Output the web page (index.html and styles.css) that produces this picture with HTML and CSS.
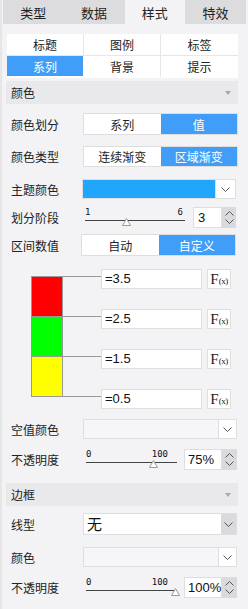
FILE: index.html
```html
<!DOCTYPE html>
<html lang="zh">
<head>
<meta charset="utf-8">
<link rel="stylesheet" href="styles.css">
</head>
<body>
<div class="panel">
  <div class="tabs">
    <div class="tab">类型</div>
    <div class="tab">数据</div>
    <div class="tab active">样式</div>
    <div class="tab">特效</div>
  </div>

  <div class="subtabs">
    <div class="st">标题</div><div class="st">图例</div><div class="st">标签</div>
    <div class="st sel">系列</div><div class="st">背景</div><div class="st">提示</div>
  </div>

  <div class="shead h-color"><span>颜色</span><span class="caret"></span></div>

  <div class="row r-divide">
    <span class="label">颜色划分</span>
    <div class="seg"><span>系列</span><span class="on">值</span></div>
  </div>

  <div class="row r-type">
    <span class="label">颜色类型</span>
    <div class="seg"><span>连续渐变</span><span class="on">区域渐变</span></div>
  </div>

  <div class="row r-theme">
    <span class="label">主题颜色</span>
    <div class="picker">
      <div class="picker-color"></div>
      <div class="picker-btn"><svg width="9" height="5" viewBox="0 0 9 5"><polyline points="0.5,0.5 4.5,4.5 8.5,0.5" fill="none" stroke="#555" stroke-width="1"/></svg></div>
    </div>
  </div>

  <div class="row r-stage">
    <span class="label">划分阶段</span>
    <div class="slider s-stage">
      <div class="ticks"><span>1</span><span>6</span></div>
      <div class="track"></div>
      <svg class="thumb" width="9" height="8" viewBox="0 0 9 8"><polygon points="4.5,0.5 8.5,7.5 0.5,7.5" fill="#fff" stroke="#999"/></svg>
    </div>
    <div class="spin sp-stage">
      <div class="num">3</div>
      <div class="arrows">
        <svg width="9" height="5" viewBox="0 0 9 5"><polyline points="0.5,4.5 4.5,0.5 8.5,4.5" fill="none" stroke="#555"/></svg>
        <svg width="9" height="5" viewBox="0 0 9 5"><polyline points="0.5,0.5 4.5,4.5 8.5,0.5" fill="none" stroke="#555"/></svg>
      </div>
    </div>
  </div>

  <div class="row r-range">
    <span class="label">区间数值</span>
    <div class="seg seg-range"><span>自动</span><span class="on">自定义</span></div>
  </div>

  <div class="legend">
    <div class="swatches">
      <div class="sw red"></div>
      <div class="sw green"></div>
      <div class="sw yellow"></div>
    </div>
    <div class="stops">
      <div class="stop"><span class="lead"></span><div class="val">=3.5</div><div class="fx">F<small>(x)</small></div></div>
      <div class="stop"><span class="lead"></span><div class="val">=2.5</div><div class="fx">F<small>(x)</small></div></div>
      <div class="stop"><span class="lead"></span><div class="val">=1.5</div><div class="fx">F<small>(x)</small></div></div>
      <div class="stop"><span class="lead"></span><div class="val">=0.5</div><div class="fx">F<small>(x)</small></div></div>
    </div>
  </div>

  <div class="row r-null">
    <span class="label">空值颜色</span>
    <div class="select dis">
      <div class="txt"></div>
      <div class="btn"><svg width="9" height="5" viewBox="0 0 9 5"><polyline points="0.5,0.5 4.5,4.5 8.5,0.5" fill="none" stroke="#555"/></svg></div>
    </div>
  </div>

  <div class="row r-op1">
    <span class="label">不透明度</span>
    <div class="slider s-op">
      <div class="ticks"><span>0</span><span>100</span></div>
      <div class="track"></div>
      <svg class="thumb t-75" width="9" height="8" viewBox="0 0 9 8"><polygon points="4.5,0.5 8.5,7.5 0.5,7.5" fill="#fff" stroke="#999"/></svg>
    </div>
    <div class="spin sp-op">
      <div class="num">75%</div>
      <div class="arrows">
        <svg width="9" height="5" viewBox="0 0 9 5"><polyline points="0.5,4.5 4.5,0.5 8.5,4.5" fill="none" stroke="#555"/></svg>
        <svg width="9" height="5" viewBox="0 0 9 5"><polyline points="0.5,0.5 4.5,4.5 8.5,0.5" fill="none" stroke="#555"/></svg>
      </div>
    </div>
  </div>

  <div class="shead h-border"><span>边框</span><span class="caret"></span></div>

  <div class="row r-line">
    <span class="label">线型</span>
    <div class="select">
      <div class="txt">无</div>
      <div class="btn gray"><svg width="9" height="5" viewBox="0 0 9 5"><polyline points="0.5,0.5 4.5,4.5 8.5,0.5" fill="none" stroke="#555"/></svg></div>
    </div>
  </div>

  <div class="row r-bcolor">
    <span class="label">颜色</span>
    <div class="select dis">
      <div class="txt"></div>
      <div class="btn"><svg width="9" height="5" viewBox="0 0 9 5"><polyline points="0.5,0.5 4.5,4.5 8.5,0.5" fill="none" stroke="#555"/></svg></div>
    </div>
  </div>

  <div class="row r-op2">
    <span class="label">不透明度</span>
    <div class="slider s-op">
      <div class="ticks"><span>0</span><span>100</span></div>
      <div class="track"></div>
      <svg class="thumb t-100" width="9" height="8" viewBox="0 0 9 8"><polygon points="4.5,0.5 8.5,7.5 0.5,7.5" fill="#fff" stroke="#999"/></svg>
    </div>
    <div class="spin sp-op">
      <div class="num">100%</div>
      <div class="arrows">
        <svg width="9" height="5" viewBox="0 0 9 5"><polyline points="0.5,4.5 4.5,0.5 8.5,4.5" fill="none" stroke="#555"/></svg>
        <svg width="9" height="5" viewBox="0 0 9 5"><polyline points="0.5,0.5 4.5,4.5 8.5,0.5" fill="none" stroke="#555"/></svg>
      </div>
    </div>
  </div>
</div>
</body>
</html>
```

FILE: styles.css
```css
* { box-sizing: border-box; margin: 0; padding: 0; }
html, body { width: 248px; height: 609px; overflow: hidden; }
body {
  background: #f3f3f5;
  font-family: "Noto Sans CJK SC", "Noto Sans", sans-serif;
  font-size: 12px;
  color: #222;
}
.panel {
  height: 609px;
  border-left: 2px solid #e6e6e8;
  display: flex;
  flex-direction: column;
}

/* top tabs */
.tabs { display: flex; height: 24px; margin: 0 2px 0 1px; }
.tab {
  flex: 1;
  background: #dcdcde;
  display: flex;
  align-items: center;
  justify-content: center;
  font-size: 13px;
  color: #222;
}
.tab.active { background: #f3f3f5; }

/* sub tabs */
.subtabs {
  margin: 10px 10px 0 5px;
  display: grid;
  grid-template-columns: 1fr 1fr 1fr;
  grid-template-rows: 22px 22px;
  background: #fff;
}
.st {
  display: flex;
  align-items: center;
  justify-content: center;
  border-right: 1px solid #e6e6e6;
  border-bottom: 1px solid #e6e6e6;
}
.st:nth-child(3n) { border-right: none; }
.st:nth-child(n+4) { border-bottom: 2px solid #fff; }
.st.sel { background: #409ef8; color: #fff; border-right-color: #fff; }

/* section headers */
.shead {
  height: 23px;
  margin: 0 10px 0 4px;
  padding: 0 7px 0 5px;
  background: #e9e9eb;
  display: flex;
  align-items: center;
  justify-content: space-between;
}
.h-color { margin-top: 3px; }
.h-border { margin-top: 13px; }
.caret {
  width: 0; height: 0;
  border-left: 3.5px solid transparent;
  border-right: 3.5px solid transparent;
  border-top: 4px solid #a9a9ab;
}

/* rows */
.row { display: flex; align-items: center; margin-left: 9px; }
.label { width: 72px; flex: none; }
.r-divide { margin-top: 9px; height: 22px; }
.r-type { margin-top: 11px; height: 21px; }
.r-theme { margin-top: 12px; height: 20px; }
.r-stage { margin-top: 8px; height: 21px; }
.r-range { margin-top: 6px; height: 22px; }
.r-null { margin-top: 10px; height: 20px; }
.r-op1 { margin-top: 10px; height: 21px; }
.r-line { margin-top: 7px; height: 22px; }
.r-bcolor { margin-top: 12px; height: 20px; }
.r-op2 { margin-top: 10px; height: 21px; }

/* segmented */
.seg {
  display: flex;
  width: 155px;
  height: 100%;
  border: 1px solid #dedede;
  background: #fff;
}
.seg span {
  flex: 1;
  display: flex;
  align-items: center;
  justify-content: center;
}
.seg span.on { background: #409ef8; color: #fff; }
.seg-range { margin-left: -2px; }

/* color picker */
.picker {
  display: flex;
  width: 154px;
  height: 20px;
  margin-left: -1px;
  border: 1px solid #dedede;
  background: #fff;
}
.picker-color { flex: 1; background: #22a6fc; }
.picker-btn {
  width: 20px;
  border-left: 1px solid #dedede;
  display: flex;
  align-items: center;
  justify-content: center;
}

/* sliders */
.slider { position: relative; height: 21px; flex: none; }
.ticks {
  display: flex;
  justify-content: space-between;
  font-family: "DejaVu Sans Mono", "Liberation Mono", monospace;
  font-size: 9px;
  line-height: 9px;
  height: 13px;
  padding-top: 1px;
  color: #111;
}
.track { border-top: 1px solid #444; }
.thumb { position: absolute; top: 11px; }
.s-stage { width: 100px; margin-left: 2px; }
.s-stage .ticks { padding-right: 2px; }
.s-stage .thumb { left: 37px; }
.s-op { width: 91px; margin-left: 3px; }
.s-op .ticks { padding-right: 9px; }
.t-75 { left: 63px; }
.t-100 { left: 85px; }

/* spinners */
.spin { display: flex; height: 21px; }
.spin .num {
  background: #fff;
  border: 1px solid #dedede;
  font-family: "Liberation Sans", Arial, sans-serif;
  font-size: 13px;
  line-height: 19px;
  color: #111;
}
.spin .arrows {
  width: 14px;
  background: #dadadc;
  display: flex;
  flex-direction: column;
  align-items: center;
  justify-content: space-around;
  padding: 2px 0;
}
.sp-stage { margin-left: 8px; }
.sp-stage .num { width: 29px; padding-left: 4px; }
.sp-op { margin-left: 7px; }
.sp-op .num { width: 38px; padding-left: 3px; }
.sp-op .arrows { width: 15px; }

/* legend */
.legend { display: flex; margin: 13px 0 0 29px; }
.swatches {
  margin-top: 7px;
  width: 32px;
  height: 121px;
  border: 1px solid #999;
  display: flex;
  flex-direction: column;
}
.sw { height: 39px; flex: none; }
.sw + .sw { height: 40px; border-top: 1px solid #999; }
.red { background: #ff0000; }
.green { background: #00ff00; }
.yellow { background: #ffff00; }
.stops { display: flex; flex-direction: column; gap: 20px; }
.stop { display: flex; align-items: flex-start; height: 20px; }
.lead { width: 38px; margin-top: 7px; border-top: 1px solid #999; }
.val {
  width: 101px;
  height: 20px;
  background: #fff;
  border: 1px solid #dedede;
  font-family: "Liberation Sans", Arial, sans-serif;
  font-size: 13px;
  line-height: 18px;
  padding-left: 3px;
  color: #111;
}
.fx {
  width: 24px;
  height: 20px;
  margin-left: 5px;
  background: #fff;
  border: 1px solid #dedede;
  font-family: "Liberation Serif", "Times New Roman", serif;
  font-size: 15px;
  line-height: 18px;
  text-align: center;
  color: #222;
}
.fx small { font-size: 9px; letter-spacing: -0.5px; }

/* selects */
.select {
  display: flex;
  width: 154px;
  height: 100%;
  border: 1px solid #dedede;
  background: #fff;
}
.select .txt {
  flex: 1;
  font-size: 15px;
  line-height: 20px;
  padding-left: 3px;
  color: #111;
}
.select .btn {
  width: 15px;
  display: flex;
  align-items: center;
  justify-content: center;
  background: #fff;
}
.select .btn.gray { background: #dadadc; }
.select.dis { background: #f6f6f8; }
.select.dis .btn { width: 18px; border-left: 1px solid #dedede; }
```
